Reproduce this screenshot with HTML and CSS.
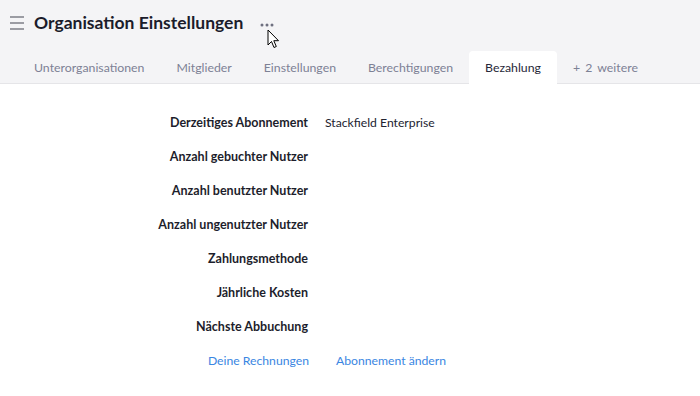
FILE: index.html
```html
<!DOCTYPE html>
<html lang="de">
<head>
    <meta charset="UTF-8">
    <title>Organisation Einstellungen</title>
    <link rel="stylesheet" href="styles.css">
</head>
<body>
    <header class="org-header">
        <div class="title-row">
            <span class="menu-icon">
                <span></span>
                <span></span>
                <span></span>
            </span>
            <h1 class="page-title">Organisation Einstellungen</h1>
            <span class="more-btn">
                <svg width="14" height="4" viewBox="0 0 14 4"><circle cx="2" cy="2" r="1.5"/><circle cx="7" cy="2" r="1.5"/><circle cx="12" cy="2" r="1.5"/></svg>
                <svg class="cursor" width="14" height="20" viewBox="0 0 14 20"><path d="M1 1 L1 16 L4.5 12.5 L7 18.5 L9.3 17.5 L6.8 11.7 L11.5 11.7 Z" fill="#fff" stroke="#000" stroke-width="1" stroke-linejoin="round"/></svg>
            </span>
        </div>
        <nav class="tabs">
            <a href="#" class="tab">Unterorganisationen</a>
            <a href="#" class="tab">Mitglieder</a>
            <a href="#" class="tab">Einstellungen</a>
            <a href="#" class="tab">Berechtigungen</a>
            <a href="#" class="tab active">Bezahlung</a>
            <a href="#" class="tab more-tab">+ 2 weitere</a>
        </nav>
    </header>

    <main class="billing">
        <div class="row"><div class="label">Derzeitiges Abonnement</div><div class="value">Stackfield Enterprise</div></div>
        <div class="row"><div class="label">Anzahl gebuchter Nutzer</div><div class="value"></div></div>
        <div class="row"><div class="label">Anzahl benutzter Nutzer</div><div class="value"></div></div>
        <div class="row"><div class="label">Anzahl ungenutzter Nutzer</div><div class="value"></div></div>
        <div class="row"><div class="label">Zahlungsmethode</div><div class="value"></div></div>
        <div class="row"><div class="label">Jährliche Kosten</div><div class="value"></div></div>
        <div class="row"><div class="label">Nächste Abbuchung</div><div class="value"></div></div>
        <div class="row links">
            <div class="label"><a href="#" class="link">Deine Rechnungen</a></div>
            <div class="value"><a href="#" class="link">Abonnement ändern</a></div>
        </div>
    </main>
</body>
</html>
```

FILE: styles.css
```css
* {
    margin: 0;
    padding: 0;
    box-sizing: border-box;
}

body {
    font-family: Lato, "Liberation Sans", sans-serif;
    background: #fff;
    color: #1d1e2c;
}

.org-header {
    background: #f4f4f6;
    border-bottom: 1px solid #e5e5e8;
}

.title-row {
    display: flex;
    align-items: center;
    height: 51px;
    padding-left: 10px;
    padding-bottom: 6px;
}

.menu-icon {
    display: flex;
    flex-direction: column;
    gap: 4px;
    width: 14px;
    margin-right: 10px;
}

.menu-icon span {
    height: 2px;
    background: #9b9ca3;
}

.page-title {
    font-size: 17.5px;
    font-weight: 700;
    color: #1b1c2b;
}

.more-btn {
    position: relative;
    display: flex;
    margin-left: 17px;
    margin-top: 4px;
    fill: #6e7080;
}

.cursor {
    position: absolute;
    left: 7px;
    top: 6px;
}

.tabs {
    display: flex;
    padding-left: 18px;
    height: 32px;
}

.tab {
    display: flex;
    align-items: center;
    padding: 0 16px;
    font-size: 12.3px;
    color: #7d8195;
    text-decoration: none;
    border-radius: 4px 4px 0 0;
}

.tab.active {
    background: #fff;
    color: #272838;
    margin-bottom: -1px;
}

.more-tab {
    word-spacing: 2px;
}

.billing {
    padding-top: 21px;
}

.row {
    display: grid;
    grid-template-columns: 308px 1fr;
    column-gap: 17px;
    height: 34px;
    align-items: center;
    font-size: 12.2px;
}

.label {
    text-align: right;
    font-weight: 700;
    font-size: 12.5px;
}

.value {
    color: #222330;
}

.links {
    grid-template-columns: 309px 1fr;
    column-gap: 27px;
}

.links .label {
    font-weight: 400;
    font-size: 12.2px;
}

.link {
    color: #3a86e2;
    text-decoration: none;
}
```
